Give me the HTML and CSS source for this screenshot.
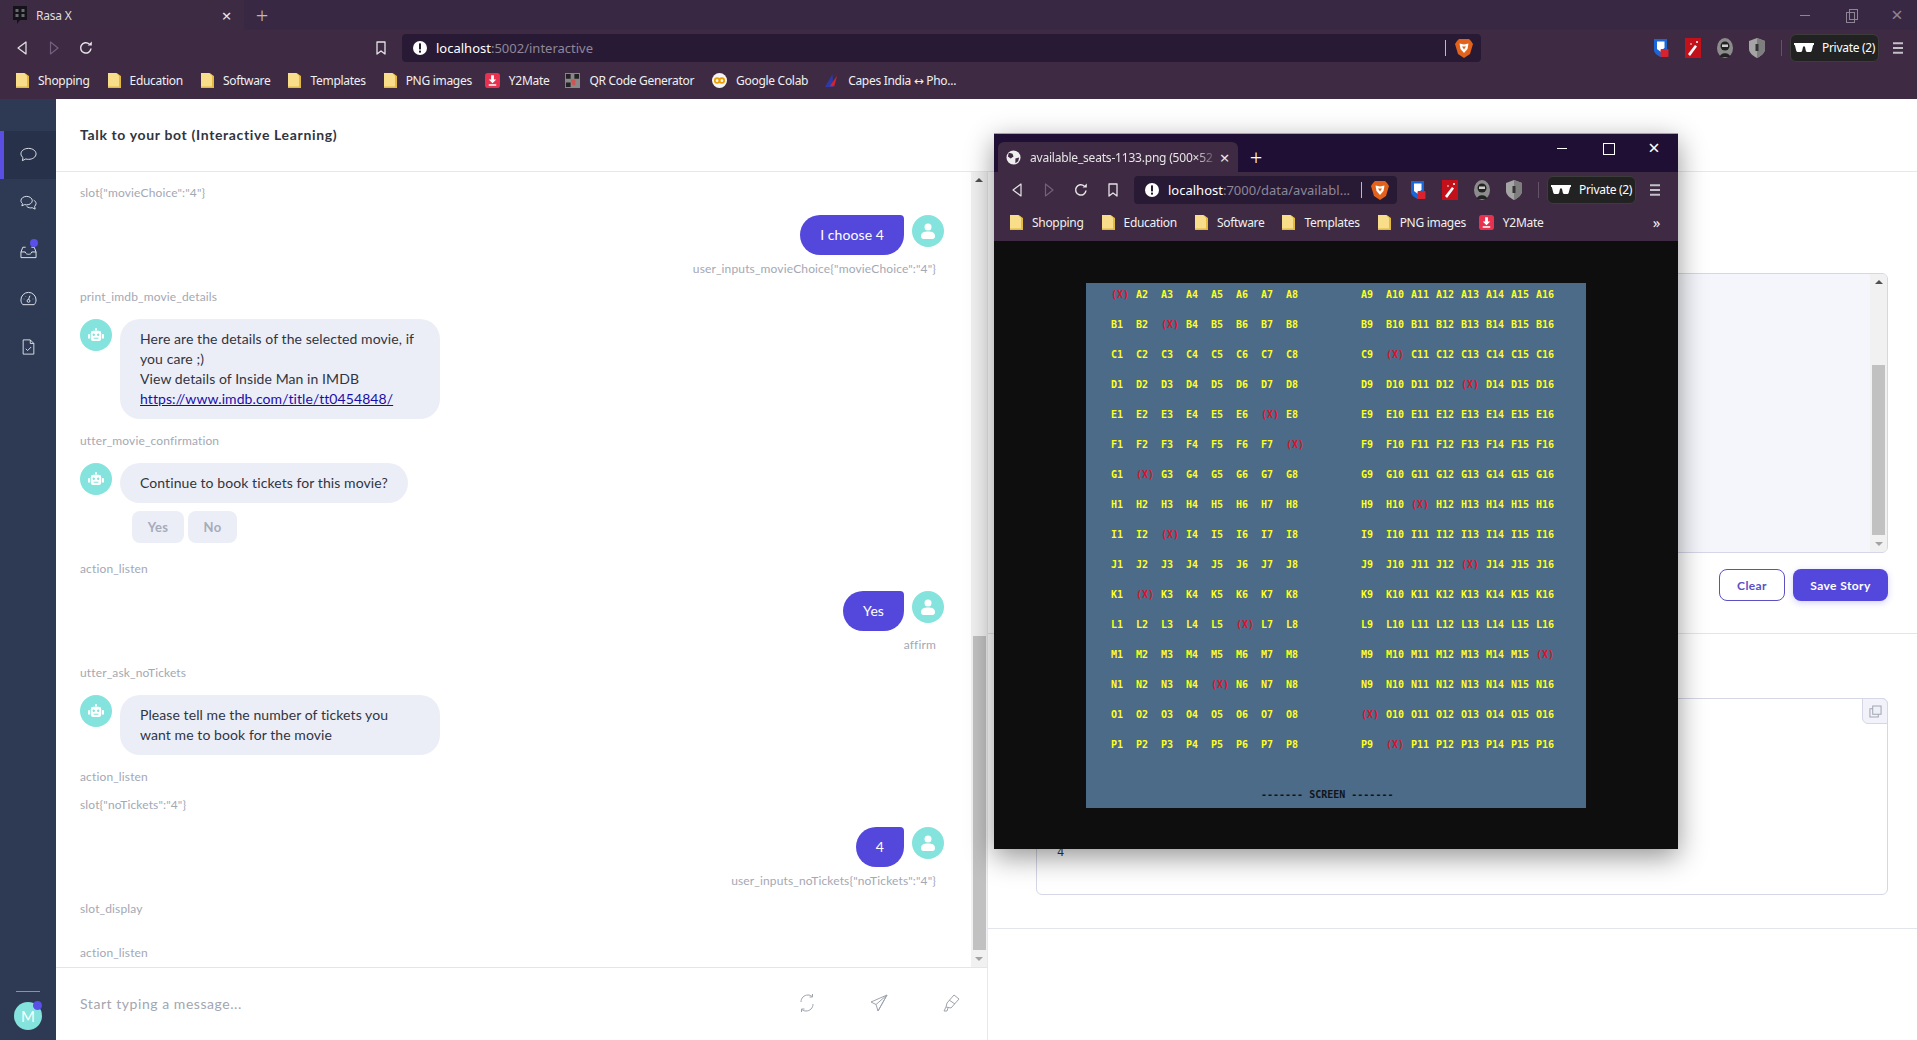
FILE: index.html
```html
<!DOCTYPE html>
<html lang="en">
<head>
  <meta charset="UTF-8" />
  <title>Rasa X</title>
  <link rel="stylesheet" href="styles.css">
</head>
<body>
  <svg class="sprites" width="0" height="0">
    <symbol id="i-back" viewBox="0 0 16 16"><path d="M12 2v12L4 8z" fill="none" stroke="currentColor" stroke-width="1.200" stroke-linejoin="round"/></symbol>
    <symbol id="i-forward" viewBox="0 0 16 16"><path d="M4.500 2v12L12 8z" fill="none" stroke="currentColor" stroke-width="1.200" stroke-linejoin="round"/></symbol>
    <symbol id="i-reload" viewBox="0 0 16 16"><path d="M13 8.500A5.200 5.200 0 1 1 11.300 4" fill="none" stroke="currentColor" stroke-width="1.500"/><path d="M9.600 5.600h4.200V1.400z" fill="currentColor"/></symbol>
    <symbol id="i-bookmark" viewBox="0 0 16 16"><path d="M4 2h8v12l-4-3-4 3z" fill="none" stroke="currentColor" stroke-width="1.300" stroke-linejoin="round"/></symbol>
    <symbol id="i-info" viewBox="0 0 16 16"><circle cx="8" cy="8" r="7" fill="#fff"/><rect x="7" y="3.400" width="2" height="6" fill="#281a34"/><rect x="7" y="10.600" width="2" height="2" fill="#281a34"/></symbol>
    <symbol id="i-brave" viewBox="0 0 18 20"><path d="M4 1h10l2 2 2 3-3 10-6 4-6-4L0 6l2-3z" fill="#e2611b"/><path d="M4.500 5.500 9 6.500l4.500-1-1 5.500L9 15l-3.500-4z" fill="#fff"/><path d="M7 8.500h4L9 11.500z" fill="#e2611b"/></symbol>
    <symbol id="i-ext-key" viewBox="0 0 16 20"><path d="M1 1h13v11c0 3-3 5-6.500 7C4 17 1 15 1 12z" fill="#1a66d6"/><path d="M4 3.500h7.500v6L8 14 4 11z" fill="#fff"/><rect x="7.500" y="11" width="8" height="8" rx="1" fill="#d8232f"/></symbol>
    <symbol id="i-ext-wand" viewBox="0 0 16 20"><rect width="16" height="20" fill="#c3111b"/><path d="M3 16 10 7l2 1.500L5 18z" fill="#fff"/><circle cx="12" cy="4" r="1" fill="#fff"/><circle cx="6" cy="6" r=".8" fill="#fff"/></symbol>
    <symbol id="i-ext-ninja" viewBox="0 0 16 20"><ellipse cx="8" cy="10" rx="8" ry="10" fill="#8c8c8c"/><circle cx="8" cy="8" r="4.500" fill="#222"/><rect x="5" y="6.500" width="6" height="2.500" fill="#cfcfcf"/><path d="M3 19c0-5 10-5 10 0z" fill="#222"/></symbol>
    <symbol id="i-ext-shield" viewBox="0 0 16 20"><path d="M8 0l8 3v8c0 4-4 7-8 9-4-2-8-5-8-9V3z" fill="#a5a5a5"/><path d="M8 0l8 3v8c0 4-4 7-8 9z" fill="#7e7e7e"/><rect x="6.500" y="6" width="3" height="7" fill="#333"/></symbol>
    <symbol id="i-glasses" viewBox="0 0 22 12"><path d="M0 1h22v2l-1 .5-1.500 6c-.3 1-1 1.500-2 1.500H15c-1 0-1.700-.5-2-1.500L12 5h-2l-1 4.500C8.700 10.500 8 11 7 11H4.500c-1 0-1.700-.5-2-1.500L1 3.500 0 3z" fill="#fff"/></symbol>
    <symbol id="i-menu" viewBox="0 0 12 14"><path d="M0 0h12v2.400H0zM0 5.800h12v2.400H0zM0 11.600h12V14H0z" fill="#c4c0c8"/></symbol>
    <symbol id="i-folder" viewBox="0 0 13 15"><path d="M0 0h8.500L11 2v13H0z" fill="#f8dd8a"/><path d="M8.500 0 13 3v12h-2V3z" fill="#e3b93f"/><path d="M0 13.500h13V15H0z" fill="#e3b93f"/></symbol>
    <symbol id="i-y2" viewBox="0 0 16 16"><rect width="16" height="16" rx="3" fill="#e8304f"/><path d="M6.500 2.500h3V7H12L8 11 4 7h2.500zM4 12h8v1.500H4z" fill="#fff"/></symbol>
    <symbol id="i-bot" viewBox="0 0 20 18"><rect x="9.200" y="0" width="1.600" height="3" fill="#fff"/><circle cx="10" cy="1.200" r="1.300" fill="#fff"/><rect x="3.500" y="3" width="13" height="13" rx="3" fill="#fff"/><rect x="0" y="7" width="2.600" height="6" rx="1.200" fill="#fff"/><rect x="17.400" y="7" width="2.600" height="6" rx="1.200" fill="#fff"/><circle cx="7.200" cy="8" r="1.500" fill="#84e3dc"/><circle cx="12.800" cy="8" r="1.500" fill="#84e3dc"/><rect x="7" y="11.800" width="6" height="1.300" fill="#84e3dc"/></symbol>
    <symbol id="i-user" viewBox="0 0 16 18"><circle cx="8" cy="4.500" r="4" fill="#fff"/><path d="M0 15c0-4 3-5.500 8-5.500s8 1.500 8 5.500c0 2-1 3-3 3H3c-2 0-3-1-3-3z" fill="#fff"/></symbol>
  </svg>

  <!-- main browser window -->
  <div class="tabstrip">
    <div class="tab">
      <svg class="tab-icon" viewBox="0 0 14 18"><path d="M0 0h14v14H7l-3 4v-4H0z" fill="#15131a"/><path d="M2.500 3h3v3h-3zM8.500 3h3v3h-3zM2.500 8h3v3h-3zM8.500 8h3v3h-3z" fill="#6a6a70"/></svg>
      <span class="tab-title">Rasa X</span>
      <span class="tab-close">×</span>
    </div>
    <span class="tab-new">+</span>
    <div class="win-controls">
      <span class="win-btn win-min"></span>
      <span class="win-btn win-restore"></span>
      <span class="win-btn win-close">×</span>
    </div>
  </div>

  <div class="toolbar">
    <span class="nav-btn"><svg class="nav-icon"><use href="#i-back"/></svg></span>
    <span class="nav-btn dim"><svg class="nav-icon"><use href="#i-forward"/></svg></span>
    <span class="nav-btn"><svg class="nav-icon"><use href="#i-reload"/></svg></span>
    <span class="nav-btn main-bookmark"><svg class="nav-icon"><use href="#i-bookmark"/></svg></span>
    <div class="address main-address">
      <svg class="addr-info"><use href="#i-info"/></svg>
      <span class="addr-text"><b>localhost</b>:5002/interactive</span>
      <span class="addr-sep"></span>
      <svg class="addr-brave"><use href="#i-brave"/></svg>
    </div>
    <span class="ext first-ext"><svg class="ext-icon"><use href="#i-ext-key"/></svg></span>
    <span class="ext"><svg class="ext-icon"><use href="#i-ext-wand"/></svg></span>
    <span class="ext"><svg class="ext-icon"><use href="#i-ext-ninja"/></svg></span>
    <span class="ext"><svg class="ext-icon"><use href="#i-ext-shield"/></svg></span>
    <span class="tool-sep"></span>
    <span class="private"><svg class="glasses"><use href="#i-glasses"/></svg>Private (2)</span>
    <span class="nav-btn"><svg class="menu-icon"><use href="#i-menu"/></svg></span>
  </div>

  <div class="bookmarks">
    <span class="mark"><svg class="folder"><use href="#i-folder"/></svg>Shopping</span>
    <span class="mark"><svg class="folder"><use href="#i-folder"/></svg>Education</span>
    <span class="mark"><svg class="folder"><use href="#i-folder"/></svg>Software</span>
    <span class="mark"><svg class="folder"><use href="#i-folder"/></svg>Templates</span>
    <span class="mark"><svg class="folder"><use href="#i-folder"/></svg>PNG images</span>
    <span class="mark mark-y2"><svg class="fav"><use href="#i-y2"/></svg>Y2Mate</span>
    <span class="mark mark-tight">
      <svg class="fav" viewBox="0 0 16 16"><rect width="16" height="16" fill="#888"/><path d="M1 1h5v5H1zM10 1h5v5h-5zM1 10h5v5H1z" fill="#222"/><path d="M6 7h5v6H8z" fill="#c55"/></svg>QR Code Generator
    </span>
    <span class="mark">
      <svg class="fav" viewBox="0 0 16 16"><circle cx="8" cy="8" r="8" fill="#f4f4f4"/><circle cx="5.500" cy="8" r="2.500" fill="none" stroke="#e8a200" stroke-width="1.800"/><circle cx="10.500" cy="8" r="2.500" fill="none" stroke="#f09a00" stroke-width="1.800"/></svg>Google Colab
    </span>
    <span class="mark mark-tight">
      <svg class="fav" viewBox="0 0 16 16"><path d="M1 15 9 1l1 14z" fill="#2b3aa8"/><path d="M6 14 14 3l-3 11z" fill="#d4232d"/></svg>Capes India ↔ Pho...
    </span>
  </div>

  <!-- Rasa X app -->
  <div class="app">
    <nav class="sidebar">
      <a class="side-item active">
        <svg class="side-icon" viewBox="0 0 18 16"><path d="M9 1C4.600 1 1 3.400 1 6.800c0 1.600.9 3 2.200 4l-.7 3.200 3.600-1.800c.9.300 1.900.4 2.900.4 4.400 0 8-2.500 8-5.800S13.400 1 9 1z"/></svg>
      </a>
      <a class="side-item">
        <svg class="side-icon" viewBox="0 0 18 16"><path d="M7 1C3.700 1 1 3 1 5.500c0 1.200.6 2.300 1.600 3.100L2 11l2.800-1.300c.7.200 1.400.3 2.200.3 3.300 0 6-2 6-4.500S10.300 1 7 1z"/><path d="M14.500 5c1.500.8 2.500 2 2.500 3.500 0 1.200-.6 2.200-1.500 3l.5 3-3-1.500c-2 .5-4.500 0-6-1.500"/></svg>
      </a>
      <a class="side-item">
        <svg class="side-icon" viewBox="0 0 18 16"><path d="M1 9v6h16V9l-2-5h-3M6 4H3L1 9h4.500c.5 2 2 2.500 3.500 2.500S12 11 12.500 9H17"/></svg>
        <span class="side-dot"></span>
      </a>
      <a class="side-item">
        <svg class="side-icon" viewBox="0 0 18 16"><path d="M3 14h12c1.200-1.300 2-3 2-5a8 8 0 0 0-16 0c0 2 .8 3.700 2 5z"/><circle cx="9" cy="10" r="1.500"/><path d="M9 8.500l1.500-4M4 8h.5M13.500 8h.5M5.500 4.800l.4.400"/></svg>
      </a>
      <a class="side-item">
        <svg class="side-icon" viewBox="0 0 18 18"><path d="M3 1h8l4 4v12H3z"/><path d="M11 1v4h4M6 11l2 2 4-4"/></svg>
      </a>
      <div class="side-bottom">
        <span class="side-rule"></span>
        <span class="side-avatar">M<span class="side-avatar-dot"></span></span>
      </div>
    </nav>

    <main class="content">
      <header class="page-header">Talk to your bot (Interactive Learning)</header>

      <div class="panels">
        <section class="chat">
          <div class="chat-body">
            <div class="messages">
              <div class="event">slot{"movieChoice":"4"}</div>
              <div class="msg user">
                <div class="bubble user-bubble">I choose 4</div>
                <span class="avatar"><svg class="user-glyph"><use href="#i-user"/></svg></span>
              </div>
              <div class="intent">user_inputs_movieChoice{"movieChoice":"4"}</div>

              <div class="event">print_imdb_movie_details</div>
              <div class="msg">
                <span class="avatar"><svg class="bot-glyph"><use href="#i-bot"/></svg></span>
                <div class="bubble bot-bubble">Here are the details of the selected movie, if you care ;)<br>View details of Inside Man in IMDB<br><a class="bubble-link">https://www.imdb.com/title/tt0454848/</a></div>
              </div>

              <div class="event">utter_movie_confirmation</div>
              <div class="msg">
                <span class="avatar"><svg class="bot-glyph"><use href="#i-bot"/></svg></span>
                <div class="bubble bot-bubble">Continue to book tickets for this movie?</div>
              </div>
              <div class="quick-replies">
                <button class="quick-reply yes">Yes</button>
                <button class="quick-reply no">No</button>
              </div>

              <div class="event">action_listen</div>
              <div class="msg user">
                <div class="bubble user-bubble">Yes</div>
                <span class="avatar"><svg class="user-glyph"><use href="#i-user"/></svg></span>
              </div>
              <div class="intent">affirm</div>

              <div class="event">utter_ask_noTickets</div>
              <div class="msg">
                <span class="avatar"><svg class="bot-glyph"><use href="#i-bot"/></svg></span>
                <div class="bubble bot-bubble wide">Please tell me the number of tickets you want me to book for the movie</div>
              </div>

              <div class="event">action_listen</div>
              <div class="event">slot{"noTickets":"4"}</div>
              <div class="msg user">
                <div class="bubble user-bubble">4</div>
                <span class="avatar"><svg class="user-glyph"><use href="#i-user"/></svg></span>
              </div>
              <div class="intent">user_inputs_noTickets{"noTickets":"4"}</div>

              <div class="event">slot_display</div>
              <div class="event spaced">action_listen</div>
            </div>
            <div class="scrollbar chat-scrollbar">
              <span class="arrow-up"></span>
              <span class="scroll-thumb chat-thumb"></span>
              <span class="arrow-down"></span>
            </div>
          </div>
          <div class="composer">
            <div class="composer-input">Start typing a message...</div>
            <svg class="composer-icon" viewBox="0 0 20 20"><path d="M4 9c0-4 3-7 7-7 1.500 0 3 .5 4 1.500M16 11c0 4-3 7-7 7-1.500 0-3-.5-4-1.500"/><path d="M15.500 1v3h-3M4.500 19v-3h3"/></svg>
            <svg class="composer-icon" viewBox="0 0 20 20"><path d="M18 2 2 9l5 2.500L9 18zM18 2 7 11.500M18 2l-9 16"/></svg>
            <svg class="composer-icon" viewBox="0 0 20 20"><path d="M13 2l5 4-8 9-5-1 1-4zM5 14l-2 4h3l1-3M8 7l6 4"/></svg>
          </div>
        </section>

        <section class="story">
          <div class="story-editor">
            <div class="story-area"></div>
            <div class="scrollbar story-scrollbar">
              <span class="arrow-up"></span>
              <span class="scroll-thumb story-thumb"></span>
              <span class="arrow-down"></span>
            </div>
          </div>
          <div class="story-actions">
            <button class="btn-outline">Clear</button>
            <button class="btn-solid">Save Story</button>
          </div>
          <div class="story-output-wrap">
            <div class="story-output">
              <span class="copy-btn">
                <svg class="copy-icon" viewBox="0 0 14 14"><path d="M4 1h9v9H4z" fill="#eef0f8" stroke="#a2a5b5" stroke-width="1.100"/><path d="M4 4H1v9h9v-3" fill="none" stroke="#a2a5b5" stroke-width="1.100"/></svg>
              </span>
              <pre class="output-text">4</pre>
            </div>
          </div>
        </section>
      </div>
    </main>
  </div>

  <!-- second browser window showing the seat image -->
  <div class="popup">
    <div class="tabstrip popup-strip">
      <div class="tab popup-tab">
        <svg class="globe" viewBox="0 0 16 16"><circle cx="8" cy="8" r="7.500" fill="#eee"/><path d="M3 3l4 1 1 3-3 2-3-2zM10 9l4-1-1 4-3 2z" fill="#3f2a42"/></svg>
        <span class="popup-tab-title">available_seats-1133.png (500×52</span>
        <span class="tab-close">×</span>
      </div>
      <span class="tab-new popup-new">+</span>
      <div class="popup-controls">
        <span class="win-btn win-min"></span>
        <span class="win-btn win-max"></span>
        <span class="win-btn win-close">×</span>
      </div>
    </div>

    <div class="toolbar popup-toolbar">
      <span class="nav-btn"><svg class="nav-icon"><use href="#i-back"/></svg></span>
      <span class="nav-btn dim"><svg class="nav-icon"><use href="#i-forward"/></svg></span>
      <span class="nav-btn"><svg class="nav-icon"><use href="#i-reload"/></svg></span>
      <span class="nav-btn"><svg class="nav-icon"><use href="#i-bookmark"/></svg></span>
      <div class="address popup-address">
        <svg class="addr-info"><use href="#i-info"/></svg>
        <span class="addr-text"><b>localhost</b>:7000/data/availabl...</span>
        <span class="addr-sep"></span>
        <svg class="addr-brave"><use href="#i-brave"/></svg>
      </div>
      <span class="ext first-ext"><svg class="ext-icon"><use href="#i-ext-key"/></svg></span>
      <span class="ext"><svg class="ext-icon"><use href="#i-ext-wand"/></svg></span>
      <span class="ext"><svg class="ext-icon"><use href="#i-ext-ninja"/></svg></span>
      <span class="ext"><svg class="ext-icon"><use href="#i-ext-shield"/></svg></span>
      <span class="tool-sep"></span>
      <span class="private"><svg class="glasses"><use href="#i-glasses"/></svg>Private (2)</span>
      <span class="nav-btn"><svg class="menu-icon"><use href="#i-menu"/></svg></span>
    </div>

    <div class="bookmarks popup-marks">
      <span class="mark"><svg class="folder"><use href="#i-folder"/></svg>Shopping</span>
      <span class="mark"><svg class="folder"><use href="#i-folder"/></svg>Education</span>
      <span class="mark"><svg class="folder"><use href="#i-folder"/></svg>Software</span>
      <span class="mark"><svg class="folder"><use href="#i-folder"/></svg>Templates</span>
      <span class="mark"><svg class="folder"><use href="#i-folder"/></svg>PNG images</span>
      <span class="mark mark-y2"><svg class="fav"><use href="#i-y2"/></svg>Y2Mate</span>
      <span class="marks-more">»</span>
    </div>

    <div class="viewer">
      <div class="seat-map">
        <div id="seats" class="seats"></div>
        <div class="screen-label">------- SCREEN -------</div>
      </div>
    </div>
  </div>

  <script>
    // booked seat in each row, shown as (X)
    const booked = { A: 1, B: 3, C: 10, D: 13, E: 7, F: 8, G: 2, H: 11, I: 3, J: 13, K: 2, L: 6, M: 16, N: 5, O: 9, P: 10 };
    const seats = document.getElementById("seats");
    Object.keys(booked).forEach(row => {
      for (let n = 1; n <= 16; n++) {
        const seat = document.createElement("span");
        seat.className = n === booked[row] ? "seat taken" : "seat";
        seat.textContent = n === booked[row] ? "(X)" : row + n;
        seats.appendChild(seat);
      }
    });
  </script>
</body>
</html>
```

FILE: styles.css
```css
* {
  box-sizing: border-box;
}

html, body {
  height: 100%;
  margin: 0;
  overflow: hidden;
}

body {
  font-family: 'Lato', sans-serif;
  background: #fff;
  display: flex;
  flex-direction: column;
}

.sprites {
  position: absolute;
}

/* browser chrome */
.tabstrip {
  height: 30px;
  flex: none;
  display: flex;
  align-items: center;
  background: #392843;
  color: #ddd;
  font-family: 'Noto Sans', sans-serif;
}

.tab {
  width: 244px;
  height: 30px;
  display: flex;
  align-items: center;
  padding: 0 6px 0 13px;
  background: #3d2a43;
  font-size: 12px;
  letter-spacing: -0.2px;
}

.tab-icon {
  width: 14px;
  height: 18px;
}

.tab-title {
  margin-left: 9px;
  flex: 1;
}

.tab-close {
  font-size: 17px;
  width: 13px;
  text-align: center;
  margin-right: 5px;
  color: #e6e6e6;
}

.tab-new {
  margin-left: 10px;
  font-size: 22px;
  font-weight: 300;
  color: #bbb;
  width: 16px;
  text-align: center;
}

.win-controls {
  margin-left: auto;
  display: flex;
  gap: 26px;
  padding-right: 10px;
  color: #8d8593;
}

.win-btn {
  width: 20px;
  height: 16px;
  position: relative;
  display: block;
  font-size: 20px;
  line-height: 16px;
  text-align: center;
}

.win-min::after {
  content: "";
  position: absolute;
  left: 5px;
  right: 5px;
  top: 8px;
  border-top: 1px solid currentColor;
}

.win-restore::after {
  content: "";
  position: absolute;
  left: 5px;
  top: 5px;
  width: 7px;
  height: 9px;
  border: 1px solid currentColor;
}

.win-restore::before {
  content: "";
  position: absolute;
  left: 8px;
  top: 2px;
  width: 7px;
  height: 9px;
  border: 1px solid currentColor;
}

.win-max::after {
  content: "";
  position: absolute;
  left: 5px;
  top: 3px;
  width: 10px;
  height: 10px;
  border: 1px solid currentColor;
}

.toolbar {
  height: 35px;
  flex: none;
  display: flex;
  align-items: center;
  padding: 0 3px 0 6px;
  background: #3f2a43;
  color: #e4e4e4;
  font-family: 'Noto Sans', sans-serif;
}

.nav-btn {
  width: 32px;
  height: 28px;
  flex: none;
  display: flex;
  align-items: center;
  justify-content: center;
}

.nav-btn.dim {
  color: #74607c;
}

.nav-icon {
  width: 16px;
  height: 16px;
}

.menu-icon {
  width: 10px;
  height: 12px;
}

.main-bookmark {
  margin-left: 263px;
}

.address {
  height: 28px;
  flex: none;
  margin-left: 5px;
  display: flex;
  align-items: center;
  padding: 0 8px 0 10px;
  border-radius: 4px;
  background: #281a34;
  font-size: 13px;
  color: #8f8798;
}

.main-address {
  width: 1079px;
}

.addr-info {
  width: 16px;
  height: 16px;
  flex: none;
}

.addr-text {
  margin-left: 8px;
  white-space: nowrap;
}

.addr-text b {
  font-weight: 400;
  color: #fff;
}

.addr-sep {
  margin-left: auto;
  width: 1px;
  height: 16px;
  background: #bbb;
}

.addr-brave {
  width: 18px;
  height: 20px;
  flex: none;
  margin-left: 9px;
}

.ext {
  width: 32px;
  height: 20px;
  flex: none;
  display: flex;
  justify-content: center;
}

.first-ext {
  margin-left: auto;
}

.ext-icon {
  width: 16px;
  height: 20px;
}

.tool-sep {
  width: 1px;
  height: 16px;
  flex: none;
  margin: 0 8px;
  background: #635269;
}

.private {
  width: 89px;
  height: 28px;
  flex: none;
  display: flex;
  align-items: center;
  gap: 8px;
  padding-left: 3px;
  margin-right: 3px;
  border-radius: 6px;
  border: 1px solid #3c3c3c;
  background: #222;
  color: #fff;
  font-size: 12px;
  letter-spacing: -0.3px;
  white-space: nowrap;
}

.glasses {
  width: 20px;
  height: 11px;
  flex: none;
}

.bookmarks {
  height: 34px;
  flex: none;
  display: flex;
  align-items: center;
  gap: 18px;
  padding: 0 0 4px 16px;
  background: #3f2a43;
  color: #f0f0f0;
  font-family: 'Noto Sans', 'DejaVu Sans', sans-serif;
  font-size: 12px;
  letter-spacing: -0.3px;
}

.mark {
  display: flex;
  align-items: center;
  white-space: nowrap;
}

.mark-y2 {
  margin-left: -5px;
}

.mark-tight {
  margin-left: -2px;
}

.folder {
  width: 13px;
  height: 15px;
  margin-right: 9px;
  flex: none;
}

.fav {
  width: 15px;
  height: 15px;
  margin-right: 9px;
  flex: none;
}

/* app layout */
.app {
  flex: 1;
  display: flex;
  min-height: 0;
}

.sidebar {
  width: 56px;
  flex: none;
  display: flex;
  flex-direction: column;
  padding-top: 32px;
  background: #2e3a53;
}

.side-item {
  height: 48px;
  position: relative;
  display: flex;
  align-items: center;
  justify-content: center;
}

.side-item.active {
  background: #27324a;
  border-left: 4px solid #5a4fe2;
  padding-right: 4px;
}

.side-icon {
  width: 17px;
  height: 16px;
  fill: none;
  stroke: #e6e9f0;
  stroke-width: 1;
}

.side-dot {
  position: absolute;
  left: 30px;
  top: 12px;
  width: 8px;
  height: 8px;
  border-radius: 50%;
  background: #5a4fe8;
}

.side-bottom {
  margin-top: auto;
  display: flex;
  flex-direction: column;
  align-items: center;
  gap: 10px;
  padding-bottom: 10px;
}

.side-rule {
  width: 24px;
  border-top: 1px solid #8a92a3;
}

.side-avatar {
  width: 28px;
  height: 28px;
  position: relative;
  display: flex;
  align-items: center;
  justify-content: center;
  border-radius: 50%;
  background: #84e3dc;
  color: #fff;
  font-size: 15px;
}

.side-avatar-dot {
  position: absolute;
  right: 0;
  top: -1px;
  width: 9px;
  height: 9px;
  border-radius: 50%;
  background: #5a4fe8;
}

.content {
  flex: 1;
  min-width: 0;
  display: flex;
  flex-direction: column;
}

.page-header {
  height: 73px;
  flex: none;
  display: flex;
  align-items: center;
  padding: 0 0 2px 24px;
  border-bottom: 1px solid #e6e8f1;
  font-size: 14px;
  font-weight: 700;
  letter-spacing: 0.65px;
  color: #30353f;
}

.panels {
  flex: 1;
  display: flex;
  min-height: 0;
}

/* chat */
.chat {
  width: 932px;
  flex: none;
  display: flex;
  flex-direction: column;
  border-right: 1px solid #e6e8f1;
}

.chat-body {
  flex: 1;
  display: flex;
  min-height: 0;
  border-bottom: 1px solid #e3e5ec;
}

.messages {
  flex: 1;
  padding: 13px 27px 0 24px;
  overflow: hidden;
  font-size: 12px;
  letter-spacing: 0.14px;
  color: #a4a8b4;
}

.event {
  height: 16px;
  line-height: 16px;
  margin-bottom: 12px;
}

.event.spaced {
  margin-top: 28px;
}

.msg {
  display: flex;
  gap: 8px;
  margin-top: 14px;
}

.msg.user {
  justify-content: flex-end;
}

.msg + .event {
  margin-top: 14px;
}

.avatar {
  width: 32px;
  height: 32px;
  flex: none;
  display: flex;
  align-items: center;
  justify-content: center;
  border-radius: 50%;
  background: #84e3dc;
}

.bot-glyph {
  width: 16px;
  height: 15px;
}

.user-glyph {
  width: 14px;
  height: 16px;
}

.bubble {
  padding: 10px 20px;
  font-size: 14px;
  line-height: 20px;
  letter-spacing: 0.08px;
  border-radius: 20px;
}

.bot-bubble {
  max-width: 320px;
  background: #eceef7;
  color: #30353f;
}

.bot-bubble.wide {
  width: 320px;
}

.bubble-link {
  color: #1a0dab;
  text-decoration: underline;
}

.user-bubble {
  background: #5448dc;
  color: #fff;
  border-top-right-radius: 4px;
}

.intent {
  height: 16px;
  line-height: 16px;
  margin: 6px 0 12px;
  padding-right: 8px;
  text-align: right;
}

.quick-replies {
  display: flex;
  gap: 4px;
  margin: 8px 0 18px 52px;
}

.quick-reply {
  height: 32px;
  border: none;
  border-radius: 8px;
  background: #eceef7;
  color: #a6abba;
  font-family: inherit;
  font-size: 13px;
  font-weight: 700;
  letter-spacing: 0.3px;
}

.quick-reply.yes {
  width: 52px;
}

.quick-reply.no {
  width: 49px;
}

.scrollbar {
  width: 16px;
  flex: none;
  display: flex;
  flex-direction: column;
  align-items: center;
  background: #f1f1f1;
}

.arrow-up {
  margin-top: 6px;
  border: 4px solid transparent;
  border-top: 0;
  border-bottom: 4px solid #505050;
}

.arrow-down {
  margin-bottom: 6px;
  border: 4px solid transparent;
  border-bottom: 0;
  border-top: 4px solid #a3a3a3;
}

.scroll-thumb {
  width: 13px;
  background: #c1c1c1;
}

.chat-thumb {
  height: 314px;
  margin-top: auto;
  margin-bottom: 7px;
}

.composer {
  height: 72px;
  flex: none;
  display: flex;
  align-items: center;
  gap: 52px;
  padding: 0 26px 2px 24px;
}

.composer-input {
  flex: 1;
  font-size: 14px;
  letter-spacing: 0.55px;
  color: #a2a6b1;
}

.composer-icon {
  width: 20px;
  height: 20px;
  flex: none;
  fill: none;
  stroke: #9ea3ad;
  stroke-width: 1;
}

/* story side */
.story {
  flex: 1;
  min-width: 0;
  padding: 101px 29px 0 48px;
}

.story-editor {
  height: 280px;
  display: flex;
  border: 1px solid #d5d6e6;
  border-radius: 6px;
  background: #f5f6fb;
  overflow: hidden;
}

.story-area {
  flex: 1;
}

.story-scrollbar {
  width: 17px;
}

.story-thumb {
  height: 170px;
  margin-top: auto;
  margin-bottom: 7px;
}

.story-actions {
  display: flex;
  justify-content: flex-end;
  gap: 8px;
  margin-top: 16px;
  padding-bottom: 32px;
  margin-left: -48px;
  margin-right: -29px;
  padding-right: 29px;
  border-bottom: 1px solid #e3e5ec;
}

.btn-outline,
.btn-solid {
  height: 32px;
  border-radius: 8px;
  font-family: inherit;
  font-size: 12px;
  font-weight: 700;
  letter-spacing: 0.4px;
}

.btn-outline {
  width: 66px;
  border: 1px solid #5b50c4;
  background: #fff;
  color: #5b50c4;
}

.btn-solid {
  width: 95px;
  border: none;
  background: #5448dc;
  color: #fff;
  box-shadow: 0 2px 6px rgba(84, 72, 220, 0.25);
}

.story-output-wrap {
  padding: 64px 0 33px;
  margin-left: -48px;
  margin-right: -29px;
  padding-left: 48px;
  padding-right: 29px;
  border-bottom: 1px solid #e3e5ec;
}

.story-output {
  height: 197px;
  position: relative;
  border: 1px solid #d5d6e6;
  border-radius: 6px;
  background: #fff;
}

.copy-btn {
  position: absolute;
  right: -1px;
  top: -1px;
  width: 26px;
  height: 26px;
  display: flex;
  align-items: center;
  justify-content: center;
  border: 1px solid #d5d6e6;
  border-radius: 0 6px 0 6px;
  background: #f2f3fa;
}

.copy-icon {
  width: 13px;
  height: 13px;
}

.output-text {
  margin: 0;
  position: absolute;
  left: 20px;
  top: 145px;
  font-family: 'Liberation Mono', monospace;
  font-size: 12px;
  line-height: 18px;
  color: #30353f;
}

/* popup window */
.popup {
  position: absolute;
  left: 994px;
  top: 133px;
  width: 684px;
  height: 716px;
  display: flex;
  flex-direction: column;
  border-top: 1px solid #6db3d9;
  box-shadow: 0 8px 26px rgba(0, 0, 0, 0.42);
}

.popup-strip {
  height: 38px;
  align-items: flex-end;
  padding-left: 4px;
  background: #1f0f35;
  position: relative;
}

.popup-tab {
  width: 240px;
  padding: 0 2px 0 8px;
  border-radius: 6px 6px 0 0;
  background: #3f2a43;
  font-size: 12px;
}

.globe {
  width: 15px;
  height: 15px;
  flex: none;
}

.popup-tab-title {
  margin-left: 9px;
  flex: 1;
  overflow: hidden;
  white-space: nowrap;
  color: #e6e6e6;
  -webkit-mask-image: linear-gradient(to right, #000 88%, transparent);
  mask-image: linear-gradient(to right, #000 88%, transparent);
}

.popup-new {
  height: 30px;
  line-height: 30px;
  margin-left: 10px;
  color: #fff;
  font-size: 22px;
}

.popup-controls {
  position: absolute;
  right: 14px;
  top: 6px;
  display: flex;
  gap: 26px;
  color: #fff;
}

.popup-toolbar {
  height: 35px;
  padding: 0 7px;
}

.popup-address {
  width: 263px;
}

.popup-marks {
  height: 34px;
  padding-left: 16px;
}

.marks-more {
  margin-left: auto;
  margin-right: 18px;
  font-size: 15px;
}

.viewer {
  flex: 1;
  min-height: 0;
  display: flex;
  align-items: center;
  justify-content: center;
  background: #0e0e0e;
}

.seat-map {
  width: 500px;
  height: 525px;
  padding: 4px 0 0 25px;
  background: #4b6b88;
  font-family: 'DejaVu Sans Mono', monospace;
  font-size: 10px;
  font-weight: 700;
  line-height: 16px;
}

.seats {
  display: grid;
  grid-template-columns: repeat(18, 25px);
  grid-auto-rows: 16px;
  row-gap: 14px;
  color: #ffff1e;
}

.seat {
  white-space: nowrap;
}

.seat:nth-child(16n+9) {
  grid-column-start: 11;
}

.seat.taken {
  color: #e0102a;
}

.screen-label {
  margin-top: 34px;
  padding-left: 150px;
  white-space: pre;
  color: #10151b;
}
```
